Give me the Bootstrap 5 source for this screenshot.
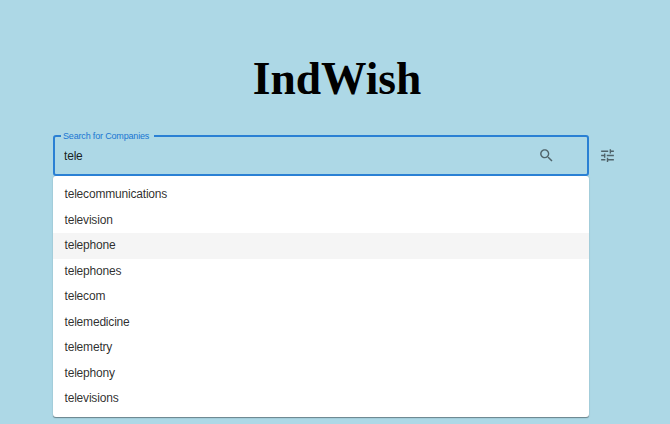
<!DOCTYPE html>
<html lang="en">
<head>
<meta charset="utf-8">
<meta name="viewport" content="width=device-width, initial-scale=1">
<title>IndWish</title>
<link href="https://cdn.jsdelivr.net/npm/bootstrap@5.3.0/dist/css/bootstrap.min.css" rel="stylesheet">
<style>
body{background:#add8e6;height:424px;font-family:"Liberation Sans",Arial,sans-serif;font-size:12px;letter-spacing:-.19px;color:rgba(0,0,0,.87)}
.brand-title{font:700 45.5px/52px "Liberation Serif","Times New Roman",serif;letter-spacing:0;color:#000;padding:53px 0 30px 4px}
.search-row{padding-left:53px;gap:9.5px;height:41px}
.search-col{width:536px}
.search-box{height:41px;border:2px solid #2a80d4;border-radius:3px;position:relative}
.search-label{left:5.5px;top:-7px;padding:0 4px 0 2.5px;width:93.5px;background:#add8e6;color:#1976d2;font-size:9px;line-height:12px;letter-spacing:-.17px}
.search-input{font-size:12px;letter-spacing:-.19px;padding:1px 0 0 9px;color:rgba(0,0,0,.87);line-height:17px}
.search-input:focus{outline:0}
.icon-btn{width:17px;height:17px;color:rgba(0,0,0,.54)}
.icon-btn svg{width:17px;height:17px;display:block}
.find-btn{margin-right:32px}
.options{width:536px;margin-left:53px;height:241px;padding:6px 0;border-radius:3px;box-shadow:0 1.4px .7px -.7px rgba(0,0,0,.2),0 .7px .7px rgba(0,0,0,.14),0 .7px 2.1px rgba(0,0,0,.12)}
.options .list-group-item{height:25.56px;padding:0 11.5px;line-height:25.56px;color:rgba(0,0,0,.84);background:transparent}
.options .hovered{background:#f5f5f5}
</style>
<script src="https://cdn.jsdelivr.net/npm/bootstrap@5.3.0/dist/js/bootstrap.bundle.min.js"></script>
</head>
<body class="overflow-hidden">
<h1 class="brand-title text-center m-0">IndWish</h1>
<div class="search-row d-flex align-items-center">
  <div class="search-col">
    <div class="search-box d-flex align-items-center">
      <label class="search-label position-absolute text-nowrap" for="company">Search for Companies</label>
      <input class="search-input flex-grow-1 border-0 bg-transparent" id="company" value="tele" autocomplete="off">
      <button class="icon-btn find-btn btn border-0 p-0" aria-label="Search"><svg viewBox="0 0 24 24" fill="currentColor"><path d="M15.5 14h-.79l-.28-.27C15.41 12.59 16 11.11 16 9.5 16 5.91 13.09 3 9.5 3S3 5.91 3 9.5 5.91 16 9.5 16c1.61 0 3.09-.59 4.23-1.57l.27.28v.79l5 4.99L20.49 19l-4.99-5zm-6 0C7.01 14 5 11.99 5 9.5S7.01 5 9.5 5 14 7.01 14 9.5 11.99 14 9.5 14z"/></svg></button>
    </div>
  </div>
  <button class="icon-btn btn border-0 p-0" aria-label="Filters"><svg viewBox="0 0 24 24" fill="currentColor"><path d="M3 17v2h6v-2H3zM3 5v2h10V5H3zm10 16v-2h8v-2h-8v-2h-2v6h2zM7 9v2H3v2h4v2h2V9H7zm14 4v-2H11v2h10zm-6-4h2V7h4V5h-4V3h-2v6z"/></svg></button>
</div>
<div class="options list-group list-group-flush bg-white">
  <div class="list-group-item border-0">telecommunications</div>
  <div class="list-group-item border-0">television</div>
  <div class="list-group-item border-0 hovered">telephone</div>
  <div class="list-group-item border-0">telephones</div>
  <div class="list-group-item border-0">telecom</div>
  <div class="list-group-item border-0">telemedicine</div>
  <div class="list-group-item border-0">telemetry</div>
  <div class="list-group-item border-0">telephony</div>
  <div class="list-group-item border-0">televisions</div>
</div>
</body>
</html>
